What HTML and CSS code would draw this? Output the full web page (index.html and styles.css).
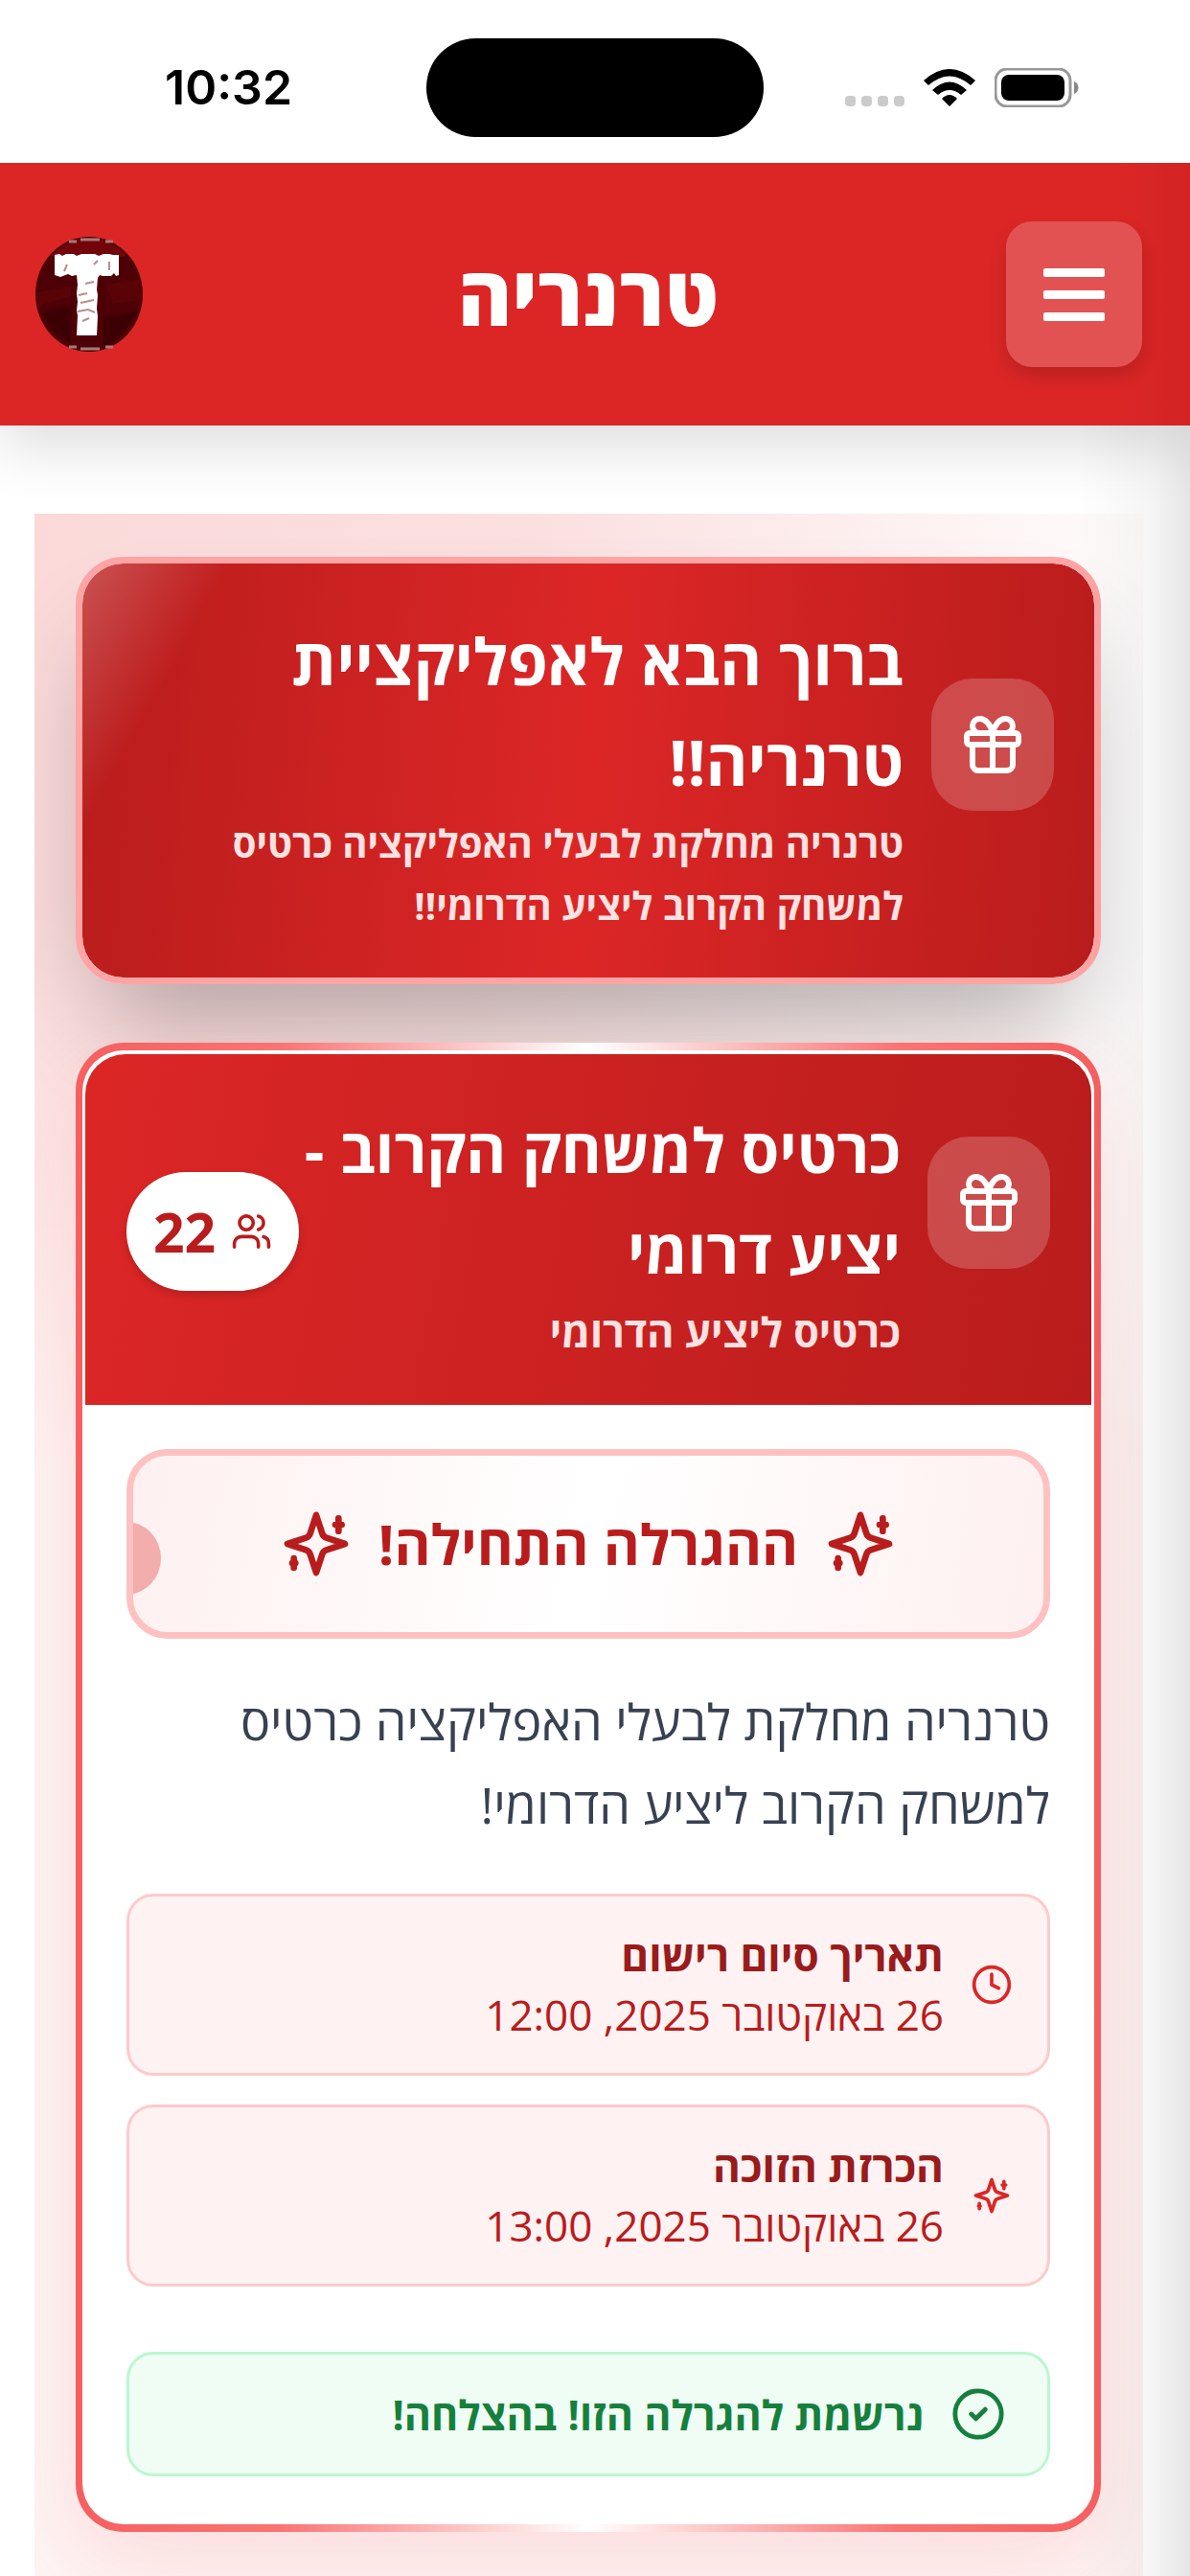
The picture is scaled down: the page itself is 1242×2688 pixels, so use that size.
FILE: index.html
```html
<!DOCTYPE html>
<html lang="he" dir="rtl">
<head>
  <meta charset="utf-8">
  <meta name="viewport" content="width=device-width, initial-scale=1">
  <title>טרנריה</title>
  <link rel="stylesheet" href="styles.css">
</head>
<body>
  <svg class="sprite" aria-hidden="true">
    <symbol id="gift" viewBox="0 0 24 24">
      <rect x="3" y="8" width="18" height="4" rx="1"/>
      <path d="M12 8v13M19 12v7a2 2 0 0 1-2 2H7a2 2 0 0 1-2-2v-7"/>
      <path d="M7.500 8a2.500 2.500 0 0 1 0-5A4.800 8 0 0 1 12 8a4.800 8 0 0 1 4.500-5 2.500 2.500 0 0 1 0 5"/>
    </symbol>
    <symbol id="sparkles" viewBox="0 0 24 24">
      <path d="m12 3-1.900 5.800a2 2 0 0 1-1.300 1.300L3 12l5.800 1.900a2 2 0 0 1 1.300 1.300L12 21l1.900-5.800a2 2 0 0 1 1.300-1.300L21 12l-5.800-1.900a2 2 0 0 1-1.300-1.300z"/>
      <path d="M5 16.500v3M19 4v4M4.500 18h1M18 6h2"/>
    </symbol>
    <symbol id="users" viewBox="0 0 24 24">
      <path d="M16 21v-2a4 4 0 0 0-4-4H6a4 4 0 0 0-4 4v2"/>
      <circle cx="9" cy="7" r="4"/>
      <path d="M22 21v-2a4 4 0 0 0-3-3.870M16 3.130a4 4 0 0 1 0 7.750"/>
    </symbol>
    <symbol id="clock" viewBox="0 0 24 24">
      <circle cx="12" cy="12" r="10"/>
      <path d="M12 6v6l4 2"/>
    </symbol>
    <symbol id="check" viewBox="0 0 24 24">
      <circle cx="12" cy="12" r="10"/>
      <path d="m9 12 2 2 4-4"/>
    </symbol>
  </svg>

  <div class="status-bar" dir="ltr">
    <span class="time">10:32</span>
    <span class="island"></span>
    <div class="status-icons">
      <svg class="signal" viewBox="0 0 62 12">
        <rect width="11" height="11" rx="4"/>
        <rect x="17" width="11" height="11" rx="4"/>
        <rect x="34" width="11" height="11" rx="4"/>
        <rect x="51" width="11" height="11" rx="4"/>
      </svg>
      <svg class="wifi" viewBox="0 0 54 40">
        <path d="M0 12Q27-12 54 12L49 17Q27-2 5 17Z"/>
        <path d="M9 22Q27 5 45 22L39 27Q27 17 15 27Z"/>
        <path d="M19 31Q27 23 35 31L27 39Z"/>
      </svg>
      <svg class="battery" viewBox="0 0 88 41">
        <rect class="shell" x="1" y="1" width="78" height="39" rx="12"/>
        <rect x="7" y="7" width="66" height="27" rx="8"/>
        <path class="cap" d="M83 14c6 2 6 11 0 13z"/>
      </svg>
    </div>
  </div>

  <header class="top-bar">
    <button class="menu" type="button" aria-label="תפריט">
      <span></span><span></span><span></span>
    </button>
    <h1>טרנריה</h1>
    <svg class="logo" viewBox="0 0 113 120" role="img" aria-label="לוגו">
      <ellipse cx="57" cy="60" rx="56" ry="60" fill="#4d0005"/>
      <path d="M17 20Q57-18 96 20L80 22H30Z" fill="#73050a"/>
      <path d="M75 50l36-6v22l-30 4zM3 58l35-6v10L4 72z" fill="#5a0307"/>
      <path d="M8 78l30-6v38Q18 104 8 78zM72 84l34-6Q96 104 72 114z" fill="#3c0004"/>
      <path d="M36 5h8m4-2h20m6 2h8M36 115h8m4 2h20m6-2h8" stroke="#a47c7c" stroke-width="3"/>
      <path d="M21 19l5-1 3 2 4-2h8l3 2 5-2h14l4 2 5-2h6l4 1h6v21l-3 1-2-3-3 3h-9l-3-1-2 3-1 12 1 6-1 14 1 8-1 20H44l1-21-1-5 1-9-1-9 1-9-1-10-5 1-4-2-8 3-6-2z" fill="#fff"/>
      <path d="M46 61l9-2M48 69l14-3M45 78l11-2 7 3M50 88l7-3M62 29l4-4M34 29l-3 7M78 26v9M53 49l9-2" stroke="#ba8d8d" stroke-width="2" fill="none"/>
    </svg>
  </header>

  <main class="page">
    <section class="feed">
      <div class="hero">
        <span class="tile"><svg class="icon"><use href="#gift"/></svg></span>
        <div class="heading">
          <h2>ברוך הבא לאפליקציית טרנריה!!</h2>
          <p>טרנריה מחלקת לבעלי האפליקציה כרטיס למשחק הקרוב ליציע הדרומי!!</p>
        </div>
      </div>

      <article class="raffle">
        <div class="raffle-inner">
          <div class="raffle-head">
            <span class="tile"><svg class="icon"><use href="#gift"/></svg></span>
            <div class="heading">
              <h2>כרטיס למשחק הקרוב - יציע דרומי</h2>
              <p>כרטיס ליציע הדרומי</p>
            </div>
            <span class="count"><svg class="icon"><use href="#users"/></svg>22</span>
          </div>
          <div class="raffle-body">
            <div class="banner">
              <svg class="icon"><use href="#sparkles"/></svg>
              <strong>ההגרלה התחילה!</strong>
              <svg class="icon"><use href="#sparkles"/></svg>
            </div>
            <p class="text">טרנריה מחלקת לבעלי האפליקציה כרטיס למשחק הקרוב ליציע הדרומי!</p>
            <div class="dates">
              <div class="date">
                <svg class="icon"><use href="#clock"/></svg>
                <div>
                  <h3>תאריך סיום רישום</h3>
                  <p>26 באוקטובר 2025, 12:00</p>
                </div>
              </div>
              <div class="date">
                <svg class="icon"><use href="#sparkles"/></svg>
                <div>
                  <h3>הכרזת הזוכה</h3>
                  <p>26 באוקטובר 2025, 13:00</p>
                </div>
              </div>
            </div>
            <div class="success">
              <svg class="icon"><use href="#check"/></svg>
              <span>נרשמת להגרלה הזו! בהצלחה!</span>
            </div>
          </div>
        </div>
      </article>
    </section>
  </main>
</body>
</html>
```
FILE: styles.css
```css
* {
  box-sizing: border-box;
}
html,
body {
  margin: 0;
  padding: 0;
}
body {
  min-height: 100vh;
  display: flex;
  flex-direction: column;
  background: #fff;
  color: #374151;
  font-family: "Open Sans", "Noto Sans", sans-serif;
  overflow-x: hidden;
}
h1, h2, h3, p {
  margin: 0;
}
.sprite {
  position: absolute;
  width: 0;
  height: 0;
}
.icon {
  flex: none;
  fill: none;
  stroke: currentColor;
  stroke-width: 2;
  stroke-linecap: round;
  stroke-linejoin: round;
}

/* status bar */
.status-bar {
  position: relative;
  z-index: 2;
  display: grid;
  grid-template-columns: 1fr auto 1fr;
  align-items: center;
  height: 170px;
  padding: 12px 116px 0 172px;
  background: #fff;
  color: #000;
}
.time {
  font-family: Inter, sans-serif;
  font-size: 50px;
  font-weight: 600;
}
.island {
  width: 352px;
  height: 103px;
  margin-right: 56px;
  border-radius: 52px;
  background: #000;
}
.status-icons {
  display: flex;
  align-items: flex-end;
  justify-content: flex-end;
  gap: 20px;
}
.signal {
  width: 62px;
  height: 12px;
  fill: #cbcbcb;
}
.wifi {
  width: 54px;
  height: 40px;
}
.battery {
  width: 88px;
  height: 41px;
}
.battery .shell {
  fill: none;
  stroke: #999;
  stroke-width: 3;
}
.battery .cap {
  fill: #888;
}

/* top bar */
.top-bar {
  position: relative;
  z-index: 1;
  display: grid;
  grid-template-columns: 1fr auto 1fr;
  align-items: center;
  height: 274px;
  padding: 0 50px 0 36px;
  background: linear-gradient(to left, #d32323, #dc2626 80px);
  box-shadow: 0 20px 60px rgba(0, 0, 0, .14);
  color: #fff;
}
.top-bar h1 {
  font-size: 86px;
  line-height: 120px;
  font-weight: 800;
}
.menu {
  display: flex;
  flex-direction: column;
  align-items: center;
  justify-content: center;
  gap: 14px;
  width: 142px;
  height: 152px;
  padding: 0;
  border: 0;
  border-radius: 27px;
  background: #e25252;
  box-shadow: 0 10px 18px rgba(0, 0, 0, .15);
}
.menu span {
  width: 64px;
  height: 9px;
  border-radius: 2px;
  background: #fff;
}
.logo {
  justify-self: end;
  width: 113px;
  height: 120px;
}

/* page */
.page {
  position: relative;
  flex: 1;
  display: flex;
  padding: 92px 49px 0 36px;
}
/* shade of the closed side drawer */
.page::after {
  content: "";
  position: absolute;
  top: 0;
  right: 0;
  bottom: 0;
  width: 120px;
  background: linear-gradient(to left, rgba(0, 0, 0, .1), rgba(0, 0, 0, .04) 40px, transparent);
  pointer-events: none;
}
.feed {
  flex: 1;
  display: flex;
  flex-direction: column;
  gap: 61px;
  padding: 45px 44px 47px 43px;
  overflow: hidden;
  background:
    linear-gradient(to bottom, transparent 400px, #fef4f4 1000px),
    linear-gradient(100deg, #fbd9d9, #fbe0e0 35%, #fff 80%);
}
.hero {
  display: flex;
  align-items: center;
  gap: 29px;
  padding: 49px 42px 43px;
  border: 7px solid #fda4a4;
  border-radius: 50px;
  background:
    linear-gradient(119deg, rgba(255, 255, 255, .24), transparent 135px) padding-box,
    linear-gradient(95deg, #b91c1c, #dc2626 50%, #b91c1c) padding-box;
  box-shadow: 0 65px 110px -30px rgba(0, 0, 0, .3);
}
.tile {
  flex: none;
  display: flex;
  align-items: center;
  justify-content: center;
  width: 128px;
  height: 138px;
  margin-bottom: 60px;
  border-radius: 43px;
  background: rgba(255, 255, 255, .2);
  color: #fff;
}
.tile .icon {
  width: 72px;
  height: 78px;
}
.heading {
  flex: 1;
}
.heading h2 {
  color: #fff;
  font-size: 67px;
  line-height: 105px;
  font-weight: 700;
}
.heading p {
  color: #fee2e2;
  font-size: 40px;
  line-height: 65px;
  font-weight: 700;
}

/* raffle card */
.raffle {
  padding: 8px 7px;
  border-radius: 50px;
  background: linear-gradient(to right, #f65f5f, #fa7474 20%, #fff 50%, #fa7474 80%, #f65f5f);
  box-shadow: 0 30px 90px rgba(239, 68, 68, .14);
}
.raffle-inner {
  padding: 4px 3px 3px;
  border-radius: 43px;
  background: #fff;
}
.raffle-head {
  display: flex;
  align-items: center;
  gap: 28px;
  padding: 47px 43px 44px;
  border-radius: 42px 42px 0 0;
  background: linear-gradient(100deg, #dc2626, #b91c1c);
}
.raffle-head .heading {
  margin-left: -28px;
}
.raffle-head .heading h2 {
  font-size: 64px;
}
.raffle-head .heading p {
  font-size: 43px;
}
.count {
  display: flex;
  align-items: center;
  gap: 16px;
  height: 124px;
  padding: 0 28px;
  border-radius: 62px;
  background: #fff;
  box-shadow: 0 4px 8px rgba(0, 0, 0, .15);
  color: #b91c1c;
  font-size: 57px;
  font-weight: 700;
}
.count .icon {
  width: 43px;
  height: 46px;
}
.raffle-body {
  padding: 46px 43px 47px;
}
.banner {
  position: relative;
  display: flex;
  align-items: center;
  justify-content: center;
  gap: 25px;
  height: 198px;
  margin-bottom: 42px;
  border: 7px solid #fec1c1;
  border-radius: 43px;
  background: linear-gradient(100deg, #fef0f0, #fff 50%, #fef0f0);
  color: #b91c1c;
  overflow: hidden;
}
.banner::after {
  content: "";
  position: absolute;
  left: -43px;
  top: 69px;
  width: 72px;
  height: 76px;
  border-radius: 50%;
  background: #f3adad;
}
.banner strong {
  font-size: 58px;
  line-height: 80px;
}
.banner .icon {
  width: 80px;
  height: 86px;
}
.text {
  margin-bottom: 50px;
  font-size: 52px;
  line-height: 87px;
}
.dates {
  display: flex;
  flex-direction: column;
  gap: 30px;
  margin-bottom: 68px;
}
.date {
  display: flex;
  align-items: center;
  gap: 28px;
  padding: 30px 36px;
  border: 3px solid #fecaca;
  border-radius: 28px;
  background: #fef2f2;
  color: #b91c1c;
}
.date .icon {
  width: 44px;
  height: 48px;
  color: #dc2626;
}
.date h3 {
  color: #991b1b;
  font-size: 44px;
  line-height: 62px;
  font-weight: 700;
}
.date p {
  font-size: 44px;
  line-height: 62px;
}
.success {
  display: flex;
  align-items: center;
  gap: 28px;
  height: 130px;
  padding: 0 43px;
  border: 3px solid #bbf7d0;
  border-radius: 28px;
  background: #f0fdf4;
  color: #15803d;
  font-size: 43px;
  font-weight: 700;
}
.success .icon {
  width: 58px;
  height: 64px;
}
```
